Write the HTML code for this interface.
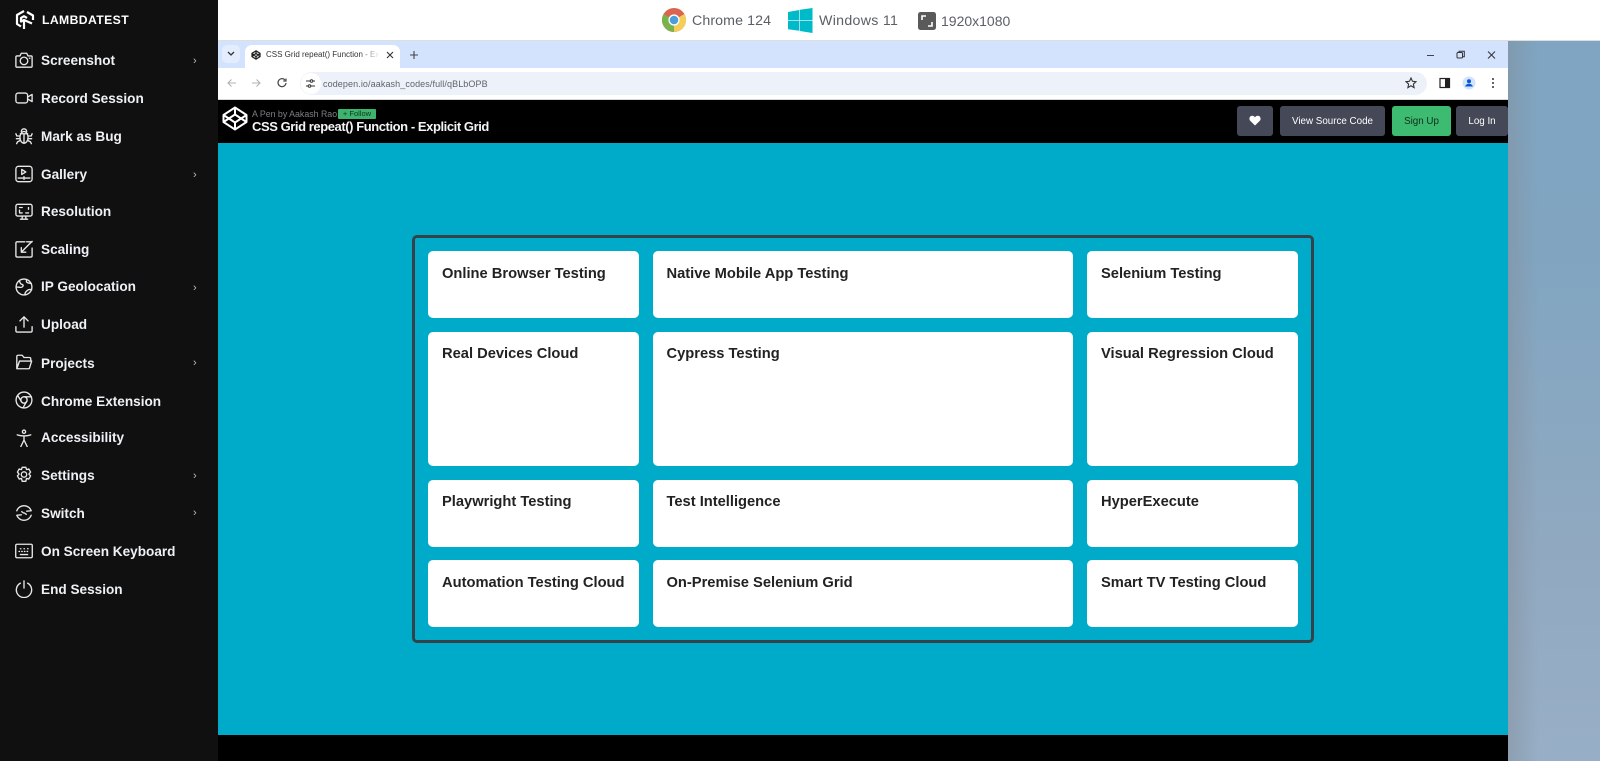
<!DOCTYPE html>
<html><head><meta charset="utf-8"><title>CSS Grid repeat() Function</title>
<style>
html,body{margin:0;padding:0;width:1600px;height:761px;overflow:hidden;background:#fff;font-family:"Liberation Sans",sans-serif}
div,span,svg{position:absolute;box-sizing:border-box}
.t{white-space:nowrap}
#side{left:0;top:0;width:218px;height:761px;background:#101011}
.mi{left:41px;color:#eef1f5;font-size:13.6px;font-weight:700;line-height:20px;white-space:nowrap;height:20px}
.ar{left:193px;color:#bbb;font-size:11px;line-height:14px;font-weight:400}
.ic{left:15px;width:18px;height:18px;fill:none;stroke:#e8e8e8;stroke-width:1.5;stroke-linecap:round;stroke-linejoin:round}
.card{background:#fff;border-radius:5px;color:#222;font-weight:700;font-size:14.7px;padding:13.5px 14px;line-height:18px;white-space:nowrap}
.btn{top:106px;height:30px;background:#444857;border-radius:3px;color:#fff;font-size:9.8px;line-height:32px;text-align:center;white-space:nowrap}
.top{top:11px;color:#5a5f66;font-size:14.2px;line-height:20px;letter-spacing:.1px;white-space:nowrap}
</style></head><body>
<div style="left:1508px;top:41px;width:92px;height:720px;background:linear-gradient(180deg,#7fa5c2 0%,#81a5c1 30%,#90a9c1 70%,#97aec6 100%)"></div>
<div style="left:1508px;top:41px;width:30px;height:720px;background:linear-gradient(90deg,rgba(130,140,150,.45),rgba(130,140,150,0))"></div>
<div style="left:218px;top:40px;width:1382px;height:1px;background:#dedede"></div>

<div style="left:218px;top:41px;width:1290px;height:28px;background:#d3e3fd"></div>
<div style="left:222px;top:45px;width:18px;height:18px;border-radius:5px;background:#e3edfd"></div>
<svg style="left:226px;top:50px" width="10" height="8" viewBox="0 0 10 8"><path d="M2 2l3 3 3-3" fill="none" stroke="#333" stroke-width="1.3"/></svg>
<div style="left:245px;top:45px;width:155px;height:24px;background:#fff;border-radius:7px 7px 0 0"></div>
<svg style="left:251px;top:50px" width="10" height="10" viewBox="0 0 12 12"><path d="M6 1l4.8 3v4L6 11 1.200 8V4zM6 1v3M6 8v3M1.200 4L6 8l4.800-4M1.200 8L6 4l4.800 4" fill="none" stroke="#222" stroke-width="1.500"/></svg>
<div class="t" style="left:266px;top:48px;width:112px;overflow:hidden;font-size:8px;line-height:14px;color:#333">CSS Grid repeat() Function - Explicit Grid</div>
<div style="left:360px;top:48px;width:20px;height:14px;background:linear-gradient(90deg,rgba(255,255,255,0),#fff)"></div>
<svg style="left:385px;top:50px" width="10" height="10" viewBox="0 0 10 10"><path d="M2 2l6 6M8 2l-6 6" stroke="#333" stroke-width="1.100"/></svg>
<svg style="left:409px;top:50px" width="10" height="10" viewBox="0 0 10 10"><path d="M5 1v8M1 5h8" stroke="#444" stroke-width="1.100"/></svg>
<svg style="left:1426px;top:50px" width="76" height="10" viewBox="0 0 76 10"><path d="M1 5.500h7" stroke="#444" stroke-width="1"/><rect x="31" y="2.500" width="5.500" height="5.500" rx="1" fill="none" stroke="#333" stroke-width="1"/><path d="M33 2.500V1.200h5.300v5.500H36.500" fill="none" stroke="#333" stroke-width="1"/><path d="M62 1.500l7 7M69 1.500l-7 7" stroke="#333" stroke-width="1"/></svg>

<div style="left:218px;top:68px;width:1290px;height:31px;background:#fff"></div>
<div style="left:218px;top:99px;width:1290px;height:1px;background:#d8d8d8"></div>
<svg style="left:226px;top:77px" width="64" height="12" viewBox="0 0 64 12"><path d="M10 6H2M5.500 2.500L2 6l3.500 3.500" fill="none" stroke="#b0b3b8" stroke-width="1.100"/><path d="M26 6h8M30.500 2.500L34 6l-3.500 3.500" fill="none" stroke="#b0b3b8" stroke-width="1.100"/><path d="M59 3a4 4 0 1 0 1 3M60 1.500V4h-2.700" fill="none" stroke="#444" stroke-width="1.200"/></svg>
<div style="left:300px;top:72px;width:1127px;height:23px;border-radius:12px;background:#edf2fa"></div>
<div style="left:301px;top:73px;width:20px;height:21px;border-radius:11px;background:#fff"></div>
<svg style="left:305px;top:78px" width="11" height="11" viewBox="0 0 11 11"><path d="M1 3h4M8 3h2M1 8h2M6 8h4" stroke="#333" stroke-width="1.100"/><circle cx="6.500" cy="3" r="1.300" fill="none" stroke="#333"/><circle cx="4.500" cy="8" r="1.300" fill="none" stroke="#333"/></svg>
<div class="t" style="left:323px;top:77px;font-size:9px;line-height:14px;color:#5f6368;letter-spacing:.1px">codepen.io/aakash_codes/full/qBLbOPB</div>
<svg style="left:1405px;top:77px" width="12" height="12" viewBox="0 0 12 12"><path d="M6 1l1.500 3.300 3.500.4-2.600 2.400.7 3.500L6 8.800l-3.100 1.800.7-3.500L1 4.700l3.500-.4z" fill="none" stroke="#333" stroke-width="1.100"/></svg>
<svg style="left:1439px;top:77px" width="12" height="12" viewBox="0 0 12 12"><rect x="1" y="1.500" width="9.500" height="9" fill="none" stroke="#222" stroke-width="1.200"/><rect x="6" y="1.500" width="4.500" height="9" fill="#222"/></svg>
<svg style="left:1462px;top:76px" width="14" height="14" viewBox="0 0 14 14"><circle cx="7" cy="7" r="6.500" fill="#d3e3fd"/><circle cx="7" cy="5.300" r="2" fill="#0b57d0"/><path d="M3.200 10.500c.6-2 2.200-2.700 3.800-2.700s3.200.7 3.800 2.700z" fill="#0b57d0"/></svg>
<svg style="left:1491px;top:77px" width="4" height="12" viewBox="0 0 4 12"><circle cx="2" cy="2" r="1" fill="#333"/><circle cx="2" cy="6" r="1" fill="#333"/><circle cx="2" cy="10" r="1" fill="#333"/></svg>

<div style="left:218px;top:100px;width:1290px;height:43px;background:#000"></div>
<svg style="left:222px;top:106px" width="26" height="25" viewBox="0 0 26 25"><path d="M13 1.500L24.500 9v7L13 23.500 1.500 16V9zM13 1.500V8.500M13 16.500v7M1.500 9L13 16.500 24.500 9M1.500 16L13 8.500 24.500 16" fill="none" stroke="#fff" stroke-width="2" stroke-linejoin="round"/></svg>
<div class="t" style="left:252px;top:107px;font-size:8.800px;line-height:14px;color:#7d7f86">A Pen by Aakash Rao</div>
<div class="t" style="left:338px;top:109px;width:38px;height:10px;background:#3cb46e;border-radius:1px;font-size:7.500px;line-height:10px;color:#11331f;text-align:center">+ Follow</div>
<div class="t" style="left:252px;top:118px;font-size:13px;line-height:18px;font-weight:700;color:#f4f4f4;letter-spacing:-.43px">CSS Grid repeat() Function - Explicit Grid</div>
<div class="btn" style="left:1237px;width:36px"></div>
<svg style="left:1249px;top:115px" width="12" height="11" viewBox="0 0 12 11"><path d="M6 10.500L1.200 5.800C-.4 4 .6.800 3.200.8 4.500.8 5.500 1.500 6 2.400 6.500 1.500 7.500.8 8.800.8c2.600 0 3.600 3.200 2 5z" fill="#fff"/></svg>
<div class="btn" style="left:1280px;width:105px">View Source Code</div>
<div class="btn" style="left:1392px;width:59px;background:#3dbb70;color:#0f2d1b">Sign Up</div>
<div class="btn" style="left:1456px;width:52px">Log In</div>

<div style="left:218px;top:143px;width:1290px;height:592px;background:#00abca"></div>
<div style="left:218px;top:735px;width:1290px;height:26px;background:#000"></div>
<div style="left:412px;top:235px;width:902px;height:408px;border:3px solid #34434b;border-radius:5px"></div>

<div class="card" style="left:428px;top:251px;width:211px;height:67px">Online Browser Testing</div>
<div class="card" style="left:652.500px;top:251px;width:420.500px;height:67px">Native Mobile App Testing</div>
<div class="card" style="left:1087px;top:251px;width:211px;height:67px">Selenium Testing</div>
<div class="card" style="left:428px;top:331.500px;width:211px;height:134.500px">Real Devices Cloud</div>
<div class="card" style="left:652.500px;top:331.500px;width:420.500px;height:134.500px">Cypress Testing</div>
<div class="card" style="left:1087px;top:331.500px;width:211px;height:134.500px">Visual Regression Cloud</div>
<div class="card" style="left:428px;top:479.500px;width:211px;height:67.500px">Playwright Testing</div>
<div class="card" style="left:652.500px;top:479.500px;width:420.500px;height:67.500px">Test Intelligence</div>
<div class="card" style="left:1087px;top:479.500px;width:211px;height:67.500px">HyperExecute</div>
<div class="card" style="left:428px;top:560px;width:211px;height:67px">Automation Testing Cloud</div>
<div class="card" style="left:652.500px;top:560px;width:420.500px;height:67px">On-Premise Selenium Grid</div>
<div class="card" style="left:1087px;top:560px;width:211px;height:67px">Smart TV Testing Cloud</div>

<svg style="left:662px;top:8px" width="24" height="24" viewBox="0 0 24 24"><circle cx="12" cy="12" r="12" fill="#d9644f"/><path d="M12 12L1.600 6A12 12 0 0 0 12 24z" fill="#7cb24c"/><path d="M12 12l10.400-6A12 12 0 0 1 12 24z" fill="#f4ce5b"/><circle cx="12" cy="12" r="5.600" fill="#fff"/><circle cx="12" cy="12" r="4.300" fill="#4a9fd8"/></svg>
<div class="top" style="left:692px">Chrome 124</div>
<svg style="left:787px;top:8px" width="26" height="25" viewBox="0 0 26 25"><path d="M1 4l11.300-2v10.300H1zM12.900 1.800L25.500 0v12.300H12.900zM1 12.900h11.300v9.900L1 21.200zM12.900 12.900h12.600V25l-12.600-2z" fill="#00b9c9"/></svg>
<div class="top" style="left:819px;letter-spacing:.3px">Windows 11</div>
<svg style="left:918px;top:12px" width="18" height="18" viewBox="0 0 18 18"><rect width="18" height="18" rx="2.500" fill="#5a5a5a"/><path d="M4 8V4h4M14 10v4h-4" fill="none" stroke="#fff" stroke-width="1.600"/></svg>
<div class="top" style="left:941px;font-size:14px;letter-spacing:0">1920x1080</div>

<div id="side"></div>
<svg style="left:14px;top:9px" width="22" height="22" viewBox="0 0 22 22"><path d="M10 2L3 6v9l4 2.500M13 3l6 3.500v4.500M10 20v-9l8 3.500M10 11l-3 1.500V9l3-1.800 3 1.800" fill="none" stroke="#fff" stroke-width="2.200" stroke-linejoin="round"/></svg>
<div class="t" style="left:42px;top:12px;font-size:12.200px;line-height:16px;font-weight:700;color:#fff;letter-spacing:.4px">LAMBDATEST</div>

<svg class="ic" style="top:51px" viewBox="0 0 20 20"><path d="M2 5.500h3.500L7 2.500h6l1.500 3H18a1 1 0 0 1 1 1V17a1 1 0 0 1-1 1H2a1 1 0 0 1-1-1V6.500a1 1 0 0 1 1-1z"/><circle cx="10" cy="11" r="4.200"/><path d="M16 8h.5"/></svg>
<div class="mi" style="top:51px">Screenshot</div><div class="ar" style="top:54px">›</div>

<svg class="ic" style="top:89px" viewBox="0 0 20 20"><rect x="1" y="4.500" width="13" height="11" rx="2.500"/><path d="M14 9l5-3v8l-5-3"/></svg>
<div class="mi" style="top:89px">Record Session</div>

<svg class="ic" style="top:127px" viewBox="0 0 20 20"><ellipse cx="10" cy="11.500" rx="4.500" ry="6.500"/><path d="M6 7.500h8M10 7.500V18M7 5c0-1.500 1.500-3 3-3s3 1.500 3 3M5.500 10H2L1 7.500M5.500 13H1.500M5.800 15l-3 1.500-1 2M14.500 10H18l1-2.500M14.500 13h4M14.200 15l3 1.500 1 2"/></svg>
<div class="mi" style="top:127px">Mark as Bug</div>

<svg class="ic" style="top:165px" viewBox="0 0 20 20"><rect x="1" y="1.500" width="18" height="17" rx="3"/><path d="M7.500 5v5.500l4.500-2.800zM3.500 14.500h13M10 13v3"/></svg>
<div class="mi" style="top:165px">Gallery</div><div class="ar" style="top:168px">›</div>

<svg class="ic" style="top:203px" viewBox="0 0 20 20"><rect x="1" y="1.500" width="18" height="13" rx="2"/><path d="M6 18h8M8 15v3M12 15v3M5 10V8M5 5h3M15 5v2M15 11h-3M5 11h3"/></svg>
<div class="mi" style="top:202px">Resolution</div>

<svg class="ic" style="top:240px" viewBox="0 0 20 20"><path d="M11 2H2.500A1.500 1.500 0 0 0 1 3.500v14A1.500 1.500 0 0 0 2.500 19h15a1.500 1.500 0 0 0 1.500-1.500V9M13 2h6M19 1.500L7 13.500M7 8.500v5h5"/></svg>
<div class="mi" style="top:240px">Scaling</div>

<svg class="ic" style="top:278px" viewBox="0 0 20 20"><circle cx="10" cy="10" r="8.800"/><path d="M5 3.500c1 2 .5 3 2.500 3.500s2 2 .5 3-4 0-6.800 0M11 18.500c0-3 1-3 2.500-4.500s3-1.500 5-1M13 2c-1 2 0 3 1.500 3.500l3.500.5"/></svg>
<div class="mi" style="top:277px">IP Geolocation</div><div class="ar" style="top:281px">›</div>

<svg class="ic" style="top:315px" viewBox="0 0 20 20"><path d="M10 13.500V2M5.500 6.500L10 2l4.500 4.500M1 13v4.500A1.500 1.500 0 0 0 2.500 19h15a1.500 1.500 0 0 0 1.500-1.500V13"/></svg>
<div class="mi" style="top:315px">Upload</div>

<svg class="ic" style="top:353px" viewBox="0 0 20 20"><path d="M2 17.500V4a1.500 1.500 0 0 1 1.500-1.500H8l2 2.500h6a1.500 1.500 0 0 1 1.500 1.500V9M2 17.500L5 9h13.500l-2.500 8a1 1 0 0 1-1 .5z"/></svg>
<div class="mi" style="top:354px">Projects</div><div class="ar" style="top:356px">›</div>

<svg class="ic" style="top:391px" viewBox="0 0 20 20"><circle cx="10" cy="10" r="8.800"/><circle cx="10" cy="10" r="3.500"/><path d="M10 6.500h8M7 11.500L3 5M13 11.500L9 18.500"/></svg>
<div class="mi" style="top:392px">Chrome Extension</div>

<svg class="ic" style="top:429px" viewBox="0 0 20 20"><circle cx="10" cy="3" r="1.800"/><path d="M2.500 6.500c3 1 4.500 1.200 7.500 1.200s4.500-.2 7.500-1.200M10 7.700v4.500M10 12.200L6.500 19.500M10 12.200l3.500 7.300"/></svg>
<div class="mi" style="top:428px">Accessibility</div>

<svg class="ic" style="top:466px" viewBox="0 0 20 20"><path d="M8 1.500h4l.8 2.500 2.500-.7 2 3.400-1.800 2.300 1.800 2-2 3.500-2.500-.7-.8 3.200H8l-.8-3.200-2.500.7-2-3.500L4.500 9 2.700 6.700l2-3.400 2.500.7z"/><circle cx="10" cy="9.500" r="3"/></svg>
<div class="mi" style="top:466px">Settings</div><div class="ar" style="top:469px">›</div>

<svg class="ic" style="top:504px" viewBox="0 0 20 20"><path d="M2 7.500A8.500 8.500 0 0 1 18 7.500L13 8M18 12.500A8.500 8.500 0 0 1 2 12.500L7 12M7.500 8.500l2 1.500M12.500 11.500l-2-1.500"/></svg>
<div class="mi" style="top:504px">Switch</div><div class="ar" style="top:506px">›</div>

<svg class="ic" style="top:542px" viewBox="0 0 20 20"><rect x=".8" y="2.500" width="18.400" height="15" rx="1.500"/><path d="M6 7.500h.5M10 7.500h.5M14 7.500h.5M4.500 10.500h.5M7.500 10.500h.5M10.500 10.500h.5M13.500 10.500h.5M6 14h8"/></svg>
<div class="mi" style="top:542px">On Screen Keyboard</div>

<svg class="ic" style="top:580px" viewBox="0 0 20 20"><path d="M6 3.500a8.500 8.500 0 1 0 8 0M10 1v8"/></svg>
<div class="mi" style="top:580px">End Session</div>
</body></html>
